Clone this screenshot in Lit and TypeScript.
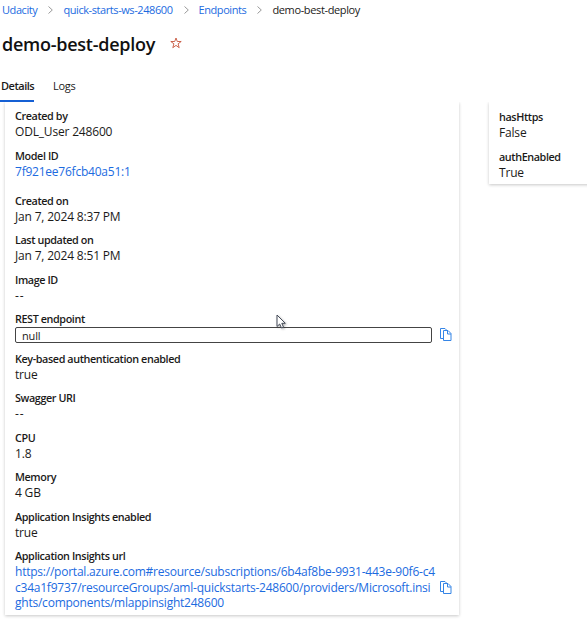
import { LitElement, html, css, svg, nothing } from "lit";
import { customElement, property } from "lit/decorators.js";
import { classMap } from "lit/directives/class-map.js";

interface Field {
  label: string;
  lines: string[];
  link?: boolean;
  input?: boolean;
  copy?: boolean;
  spaced?: boolean;
}

const DETAILS: Field[] = [
  { label: "Created by", lines: ["ODL_User 248600"] },
  { label: "Model ID", lines: ["7f921ee76fcb40a51:1"], link: true, spaced: true },
  { label: "Created on", lines: ["Jan 7, 2024 8:37 PM"] },
  { label: "Last updated on", lines: ["Jan 7, 2024 8:51 PM"] },
  { label: "Image ID", lines: ["--"] },
  { label: "REST endpoint", lines: ["null"], input: true, copy: true },
  { label: "Key-based authentication enabled", lines: ["true"] },
  { label: "Swagger URI", lines: ["--"] },
  { label: "CPU", lines: ["1.8"] },
  { label: "Memory", lines: ["4 GB"] },
  { label: "Application Insights enabled", lines: ["true"] },
  {
    label: "Application Insights url",
    lines: [
      "https://portal.azure.com#resource/subscriptions/6b4af8be-9931-443e-90f6-c4",
      "c34a1f9737/resourceGroups/aml-quickstarts-248600/providers/Microsoft.insi",
      "ghts/components/mlappinsight248600",
    ],
    link: true,
    copy: true,
  },
];

const TAGS: Field[] = [
  { label: "hasHttps", lines: ["False"] },
  { label: "authEnabled", lines: ["True"] },
];

const copyIcon = html`<svg class="copy" width="12" height="13" viewBox="0 0 12 13">
  ${svg`<path d="M3.5 10.5H.5V.5H5L7 2.5M3.5 2.5H8L11 5.5V12.5H3.5ZM7.5 2.5V6H11" fill="none" stroke="#3585e6"/>`}
</svg>`;

@customElement("detail-field")
export class DetailField extends LitElement {
  @property({ attribute: false }) field!: Field;

  static styles = css`
    :host { display: block; color: #1b1a19; }
    .label { font-size: 10.8px; line-height: 16px; font-weight: 600; letter-spacing: -0.4px; white-space: nowrap; }
    .row { display: flex; align-items: center; }
    .value { flex: none; width: 417px; font-size: 12px; line-height: 15.5px; white-space: nowrap; letter-spacing: -0.18px; }
    .empty { letter-spacing: 1px; }
    .link { color: #1c6bdf; letter-spacing: -0.23px; }
    .spaced { margin-bottom: 5.5px; }
    .input { box-sizing: border-box; height: 15.5px; border: 1px solid #444; border-radius: 2px;
      padding-left: 6px; font-size: 11px; line-height: 15px; }
    .copy { display: block; flex: none; margin-left: 7.5px; }
  `;

  render() {
    const f = this.field;
    return html`
      <div class="label">${f.label}</div>
      <div class=${classMap({ row: true, spaced: !!f.spaced })}>
        <div class=${classMap({ value: true, link: !!f.link, input: !!f.input, empty: f.lines[0] === "--" })}>
          ${f.lines.map((l) => html`<div>${l}</div>`)}
        </div>
        ${f.copy ? copyIcon : nothing}
      </div>
    `;
  }
}

@customElement("app-root")
export class AppRoot extends LitElement {
  static styles = css`
    :host { display: flex; flex-direction: column; position: relative; width: 587px; height: 621px; overflow: hidden;
      background: #fff; font-family: "Open Sans", "Noto Sans", sans-serif; color: #1b1a19; }
    .crumbs { display: flex; align-items: center; height: 20px; padding-left: 2px; font-size: 11px; line-height: 20px;
      flex: none; white-space: nowrap; letter-spacing: -0.42px; }
    .crumbs a { color: #1c6bdf; }
    .current { letter-spacing: -0.36px; }
    .chev { width: 5px; height: 8px; margin: 0 10px 0 11px; }
    .title { display: flex; align-items: center; height: 47px; padding-left: 2px; flex: none; }
    h1 { margin: 0; font-size: 18px; line-height: 24px; font-weight: 600; letter-spacing: -0.25px; color: #111; }
    .star { margin: -2px 0 0 15px; }
    .tabs { display: flex; gap: 19px; height: 35px; flex: none; font-size: 11px; line-height: 38px; }
    .tab { box-sizing: border-box; height: 35px; letter-spacing: -0.3px; }
    .active { width: 34px; font-weight: 600; border-bottom: 2px solid #1560d4; white-space: nowrap; padding-left: 1px; letter-spacing: -0.5px; }
    .panels { display: flex; align-items: flex-start; gap: 30px; flex: 1; padding-left: 5px; overflow: hidden; }
    .card { box-sizing: border-box; flex: none; display: flex; flex-direction: column; gap: 8px; background: #fff;
      box-shadow: 0 1px 3px rgba(0, 0, 0, 0.22); }
    .main { width: 454px; height: 513px; padding: 6px 8px 0 10px; }
    .side { width: 110px; height: 82px; padding: 7px 0 0 10px; }
    .cursor { position: absolute; left: 276px; top: 314px; filter: drop-shadow(1px 1px 1px rgba(0, 0, 0, 0.3)); }
  `;

  render() {
    const chev = html`<svg class="chev" viewBox="0 0 5 8"><path d="M.5 .5L4.3 4L.5 7.5" fill="none" stroke="#999"/></svg>`;
    return html`
      <nav class="crumbs">
        <a>Udacity</a>${chev}<a>quick-starts-ws-248600</a>${chev}<a>Endpoints</a>${chev}<span class="current">demo-best-deploy</span>
      </nav>
      <header class="title">
        <h1>demo-best-deploy</h1>
        <svg class="star" width="12" height="12" viewBox="0 0 12 12">
          <path d="M6 1L7.3 4.5H11.2L8.1 6.8L9.2 10.7L6 8.4L2.8 10.7L3.9 6.8L.8 4.5H4.7Z" fill="none" stroke="#c6553c" stroke-width=".9"/>
        </svg>
      </header>
      <div class="tabs">
        <div class="tab active">Details</div>
        <div class="tab">Logs</div>
      </div>
      <main class="panels">
        <section class="card main">${DETAILS.map((f) => html`<detail-field .field=${f}></detail-field>`)}</section>
        <section class="card side">${TAGS.map((f) => html`<detail-field .field=${f}></detail-field>`)}</section>
      </main>
      <svg class="cursor" width="11" height="16" viewBox="0 0 11 16">
        <path d="M1 1V12.5L3.7 10L5.5 14L7.5 13.2L5.8 9.3H9.3Z" fill="#fff" stroke="#444b58"/>
      </svg>
    `;
  }
}
